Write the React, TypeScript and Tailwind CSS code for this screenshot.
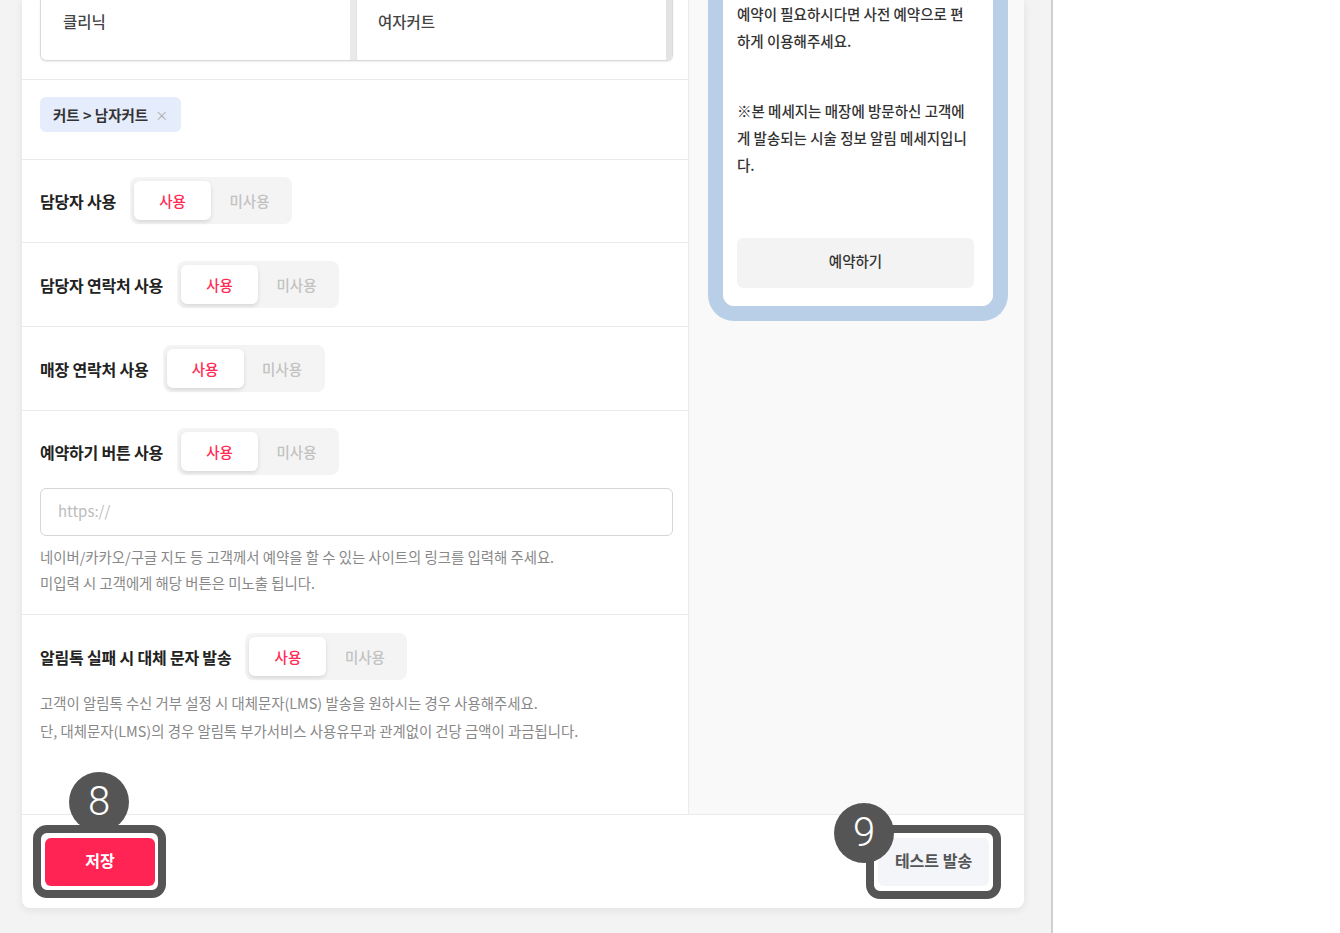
import React from "react";

function Toggle({ on = true }: { on?: boolean }) {
  return (
    <div className="flex h-[47px] w-[162px] shrink-0 rounded-lg bg-[#f4f4f4] p-[4px]">
      <button
        type="button"
        className={
          on
            ? "w-[77px] rounded-md bg-white text-[14.5px] font-medium text-[#ff2a55] shadow-[0_2px_4px_rgba(0,0,0,0.12)]"
            : "w-[77px] rounded-md text-[14.5px] font-medium text-[#c2c2c2]"
        }
      >
        사용
      </button>
      <button
        type="button"
        className={
          on
            ? "w-[77px] rounded-md text-[14.5px] font-medium text-[#c2c2c2]"
            : "w-[77px] rounded-md bg-white text-[14.5px] font-medium text-[#ff2a55] shadow-[0_2px_4px_rgba(0,0,0,0.12)]"
        }
      >
        미사용
      </button>
    </div>
  );
}

function ToggleLine({ label }: { label: string }) {
  return (
    <div className="flex items-center gap-[14px]">
      <span className="whitespace-nowrap text-[16px] font-bold tracking-[-0.2px] text-[#222]">{label}</span>
      <Toggle />
    </div>
  );
}

function Badge({ n, className }: { n: string; className: string }) {
  return (
    <div
      className={
        "absolute flex h-[60px] w-[60px] items-center justify-center rounded-full bg-[#555555] font-['Roboto',sans-serif] text-[40px] font-light leading-none text-white " +
        className
      }
    >
      {n}
    </div>
  );
}

export default function App() {
  return (
    <div className="flex h-[933px] w-[1340px] overflow-hidden bg-white font-['Noto_Sans_CJK_KR','Noto_Sans',sans-serif]">
      {/* Page area */}
      <div className="w-[1053px] shrink-0 border-r-2 border-[#cfcfcf] bg-[#f3f3f3] pl-[22px]">
        <div className="w-[1002px] rounded-b-lg bg-white shadow-[0_2px_8px_rgba(0,0,0,0.08)]">
          <div className="flex h-[814px]">
            {/* Form column */}
            <div className="flex w-[667px] shrink-0 flex-col border-r border-[#ebebeb]">
              {/* category picker */}
              <div className="border-b border-[#ebebeb] pb-[18px] pl-[18px] pr-[15px]">
                <div className="flex h-[61px] overflow-hidden rounded-b-md border border-t-0 border-[#d9d9d9] shadow-[0_1px_2px_rgba(0,0,0,0.08)]">
                  <div className="flex flex-1 border-r border-[#e3e3e3]">
                    <div className="flex-1 pl-[22px] pt-[10px] text-[15.5px] font-medium text-[#444]">클리닉</div>
                    <div className="w-[6px] bg-[#e9e9e9]" />
                  </div>
                  <div className="flex flex-1">
                    <div className="flex-1 pl-[21px] pt-[10px] text-[15.5px] font-medium text-[#444]">여자커트</div>
                    <div className="w-[6px] bg-[#e3e3e3]" />
                  </div>
                </div>
              </div>

              {/* selected chips */}
              <div className="border-b border-[#ebebeb] pb-[27px] pl-[18px] pt-[17px]">
                <span className="inline-flex h-[35px] items-center gap-[7px] rounded-md bg-[#e5ecfb] px-[13px]">
                  <span className="text-[14.5px] font-bold text-[#333]">커트 &gt; 남자커트</span>
                  <span className="text-[13px] text-[#aaa]">×</span>
                </span>
              </div>

              <div className="h-[83px] border-b border-[#ebebeb] pl-[18px] pt-[17px]">
                <ToggleLine label="담당자 사용" />
              </div>
              <div className="h-[84px] border-b border-[#ebebeb] pl-[18px] pt-[18px]">
                <ToggleLine label="담당자 연락처 사용" />
              </div>
              <div className="h-[84px] border-b border-[#ebebeb] pl-[18px] pt-[18px]">
                <ToggleLine label="매장 연락처 사용" />
              </div>

              <div className="border-b border-[#ebebeb] pb-[18px] pl-[18px] pr-[15px] pt-[17px]">
                <ToggleLine label="예약하기 버튼 사용" />
                <input
                  className="mt-[13px] h-[48px] w-full rounded-md border border-[#d6d6d6] px-[17px] pb-[4px] text-[15px] outline-none placeholder:text-[#bcbcbc]"
                  placeholder="https://"
                />
                <div className="mt-[8px] text-[14.4px] leading-[26px] text-[#888]">
                  <p>네이버/카카오/구글 지도 등 고객께서 예약을 할 수 있는 사이트의 링크를 입력해 주세요.</p>
                  <p>미입력 시 고객에게 해당 버튼은 미노출 됩니다.</p>
                </div>
              </div>

              <div className="flex-1 pl-[18px] pt-[18px]">
                <ToggleLine label="알림톡 실패 시 대체 문자 발송" />
                <div className="mt-[9px] text-[14.4px] leading-[28px] text-[#888]">
                  <p>고객이 알림톡 수신 거부 설정 시 대체문자(LMS) 발송을 원하시는 경우 사용해주세요.</p>
                  <p>단, 대체문자(LMS)의 경우 알림톡 부가서비스 사용유무과 관계없이 건당 금액이 과금됩니다.</p>
                </div>
              </div>
            </div>

            {/* Preview column */}
            <div className="flex-1 bg-[#f9f9f9] pl-[19px] pr-[16px]">
              <div className="w-[300px] rounded-b-[26px] border-[15px] border-t-0 border-[#b8cfe7]">
                <div className="rounded-b-[12px] bg-white pb-[18px] pl-[14px] pr-[19px]">
                  <div className="whitespace-nowrap text-[14.5px] font-medium leading-[27px] text-[#333]">
                    <p>예약이 필요하시다면 사전 예약으로 편</p>
                    <p>하게 이용해주세요.</p>
                    <p className="mt-[43px]">※본 메세지는 매장에 방문하신 고객에</p>
                    <p>게 발송되는 시술 정보 알림 메세지입니</p>
                    <p>다.</p>
                  </div>
                  <button
                    type="button"
                    className="mt-[60px] h-[50px] w-full rounded-md bg-[#f3f3f3] pb-[4px] text-[14.5px] font-medium text-[#333]"
                  >
                    예약하기
                  </button>
                </div>
              </div>
            </div>
          </div>

          {/* Footer */}
          <div className="flex h-[94px] items-center justify-between border-t border-[#ebebeb] pl-[23px] pr-[35px]">
            <div className="relative">
              <button
                type="button"
                className="h-[48px] w-[110px] rounded-md bg-[#ff2453] pb-[3px] text-[16px] font-bold text-white"
              >
                저장
              </button>
              <div className="pointer-events-none absolute -bottom-[12px] -left-[12px] -right-[11px] -top-[13px] rounded-[14px] border-[8px] border-[#555555]" />
              <Badge n="8" className="left-[24px] top-[-66px]" />
            </div>
            <div className="relative">
              <button
                type="button"
                className="h-[48px] w-[111px] rounded-md bg-[#f3f5f9] pb-[3px] text-[16px] font-bold text-[#555]"
              >
                테스트 발송
              </button>
              <div className="pointer-events-none absolute -bottom-[13px] -left-[12px] -right-[12px] -top-[13px] rounded-[14px] border-[8px] border-[#555555]" />
              <Badge n="9" className="left-[-44px] top-[-35px]" />
            </div>
          </div>
        </div>
      </div>
      <div className="flex-1 bg-white" />
    </div>
  );
}
